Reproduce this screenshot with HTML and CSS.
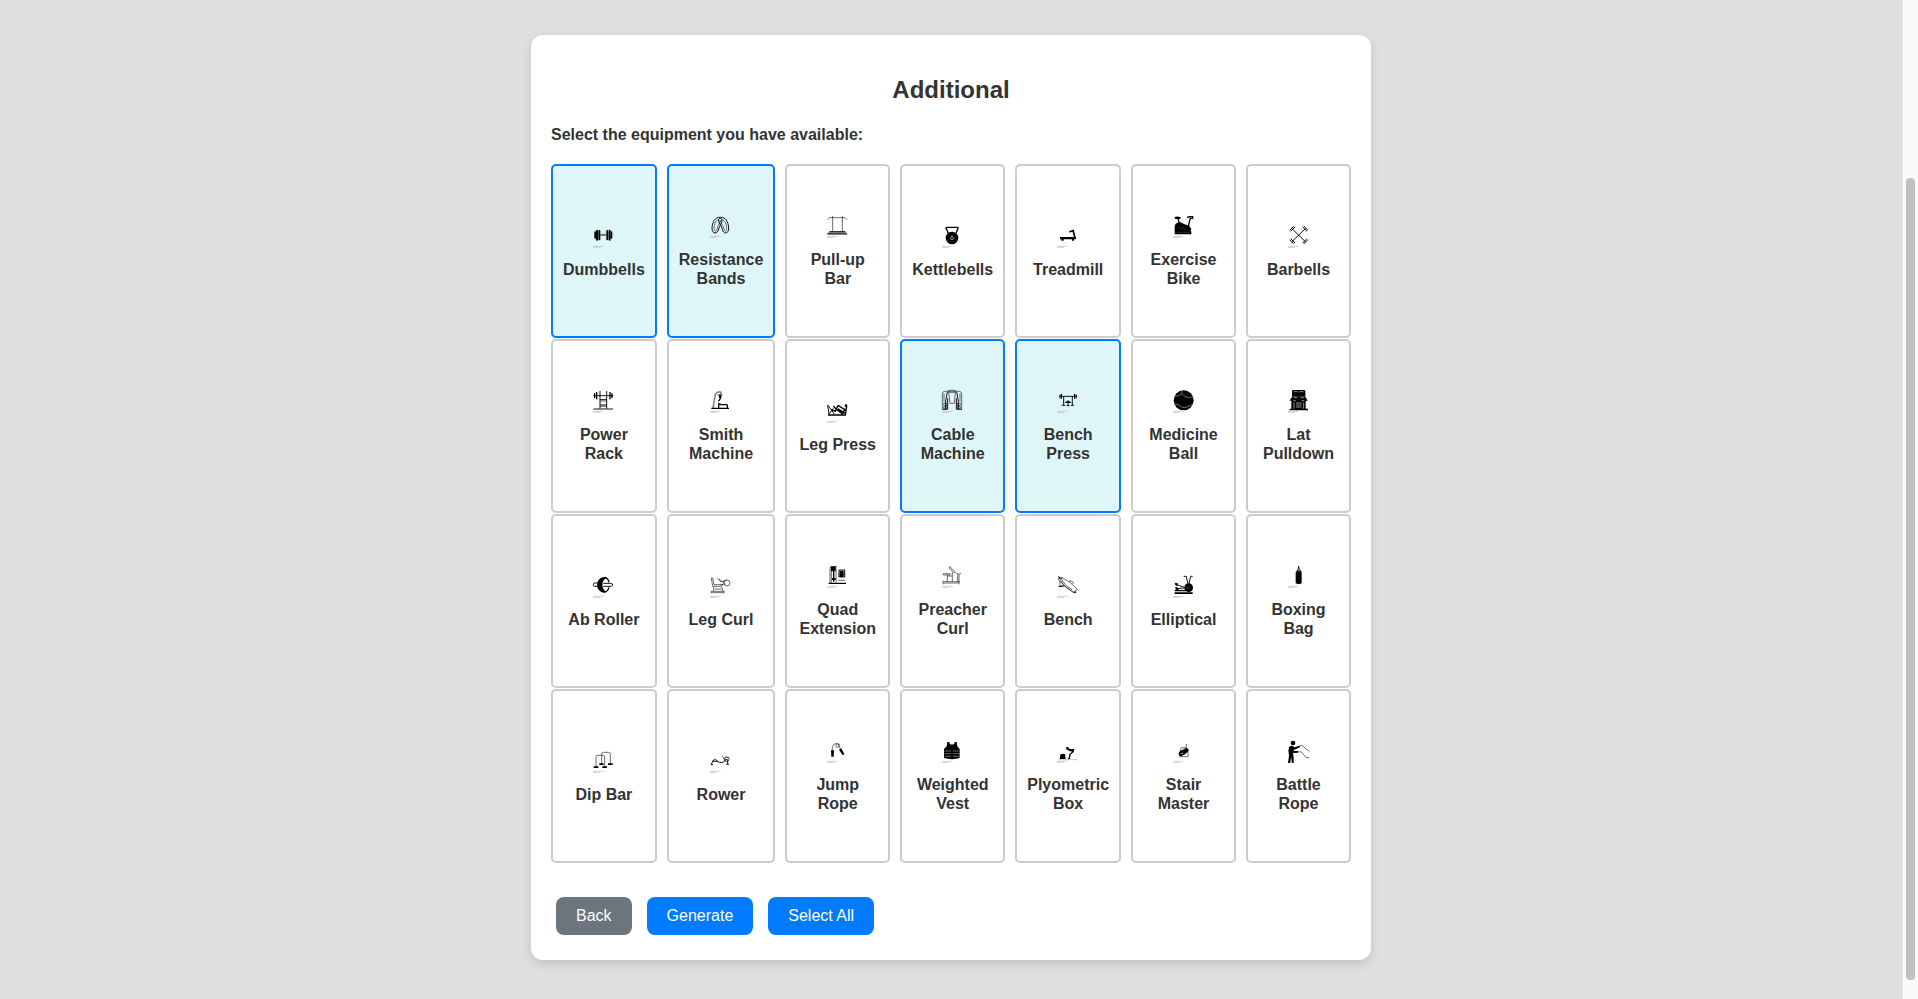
FILE: index.html
```html
<!DOCTYPE html>
<html lang="en">
<head>
<meta charset="utf-8">
<meta name="viewport" content="width=device-width, initial-scale=1">
<title>Additional</title>
<link rel="stylesheet" href="styles.css">
</head>
<body>
<svg class="defs" aria-hidden="true"><defs><g id="credit"><path d="M4 67H34M3 70H24" fill="none" stroke="#bbb" stroke-width="2"/></g></defs></svg>
<div class="page">
<main class="content">
<section class="card">
<h2 class="title">Additional</h2>
<p class="prompt" id="prompt">Select the equipment you have available:</p>
<div class="grid" role="group" aria-labelledby="prompt">

<button type="button" class="item selected" aria-pressed="true"><svg class="icon" viewBox="0 0 72 78"><rect x="7" y="22" width="5" height="22" rx="2"/><rect x="12" y="17" width="6" height="33" rx="3"/><rect x="19" y="18" width="6" height="31" rx="3"/><rect x="43" y="18" width="6" height="31" rx="3"/><rect x="50" y="17" width="6" height="33" rx="3"/><rect x="56" y="22" width="5" height="22" rx="2"/><path class="th" d="M25 31H43M25 34H43"/><use href="#credit"/></svg><span>Dumbbells</span></button>

<button type="button" class="item selected" aria-pressed="true"><svg class="icon" viewBox="0 0 72 78"><path class="ln" d="M34 10C18 8 9 27 9 43C9 62 26 61 29 45C31 34 40 29 39 18C38 10 28 11 29 19C30 30 38 36 40 46C43 62 60 60 59 42C58 24 50 8 34 10Z"/><path class="th" d="M30 16C20 18 15 32 15 43C15 54 22 54 24 45C26 33 33 29 34 18M38 16C48 18 53 32 53 43C53 54 47 54 45 45C43 34 36 30 34 20"/><use href="#credit"/></svg><span>Resistance Bands</span></button>

<button type="button" class="item" aria-pressed="false"><svg class="icon" viewBox="0 0 72 78"><path class="th" d="M4 17L10 11H57L63 17M20 6V53M49 6V53"/><path d="M10 53H58L63 58V61H4V58Z" fill="#888"/><path class="ln" d="M10 53H58M4 60H63"/><use href="#credit"/></svg><span>Pull-up<br>Bar</span></button>

<button type="button" class="item" aria-pressed="false"><svg class="icon" viewBox="0 0 72 78"><path class="bd" d="M22 28L15 12Q15 10 18 10H49Q52 10 51 13L45 28"/><circle cx="33" cy="42" r="19"/><ellipse cx="33" cy="42" rx="4" ry="5" fill="none" stroke="#ddd" stroke-width="2"/><use href="#credit"/></svg><span>Kettlebells</span></button>

<button type="button" class="item" aria-pressed="false"><svg class="icon" viewBox="0 0 72 78"><path d="M57 42L51 19M40 24L53 19" fill="none" stroke="#000" stroke-width="5"/><path d="M12 39H60V46H54V50H48V46H23V50H16V46H12Z"/><use href="#credit"/></svg><span>Treadmill</span></button>

<button type="button" class="item" aria-pressed="false"><svg class="icon" viewBox="0 0 72 78"><path d="M8 9Q16 5 26 10L25 15H11Q7 13 8 9ZM8 54V36Q12 24 25 25L38 31L52 36L58 46L55 52H58V61H8V55H12Z"/><path class="bd" d="M18 13L22 28M55 11L49 37M45 11L51 8H62V13H55"/><path d="M20 37L27 46L34 43M31 35L39 50M14 55H54" fill="none" stroke="#777" stroke-width="1"/><use href="#credit"/></svg><span>Exercise<br>Bike</span></button>

<button type="button" class="item" aria-pressed="false"><svg class="icon" viewBox="0 0 72 78"><path class="ln" d="M14 13L56 54M56 13L14 54"/><path class="ln" d="M8 19L20 7M11 22L24 9M50 6L63 19M47 9L60 22M8 47L20 60M11 44L24 57M50 60L63 47M47 57L60 44"/><use href="#credit"/></svg><span>Barbells</span></button>

<button type="button" class="item" aria-pressed="false"><svg class="icon" viewBox="0 0 72 78"><path class="ln" d="M4 20H64M24 6V59M44 6V59M24 32H44M24 51H44M4 60H63"/><path class="th" d="M24 36H44M24 47H44"/><path class="bd" d="M8 13V27M14 9V31M54 9V31M60 13V27"/><use href="#credit"/></svg><span>Power<br>Rack</span></button>

<button type="button" class="item" aria-pressed="false"><svg class="icon" viewBox="0 0 72 78"><path d="M12 57L19 16Q27 5 36 10L35 16" fill="none" stroke="#888" stroke-width="5"/><path class="bd" d="M32 18L34 29L28 37M28 43L36 47H55M55 47V57M29 46V56M7 58H60"/><path class="ln" d="M26 18H40"/><circle cx="34" cy="23" r="4"/><use href="#credit"/></svg><span>Smith<br>Machine</span></button>

<button type="button" class="item" aria-pressed="false"><svg class="icon" viewBox="0 0 72 78"><path class="ln" d="M5 18L9 46M5 18L25 45M9 46L22 28"/><path class="bd" d="M16 31L28 37L36 19M22 21L31 31L48 44L58 30M36 19L58 33M6 48H58L62 22"/><path d="M35 30L56 43" stroke="#000" stroke-width="6"/><circle cx="60" cy="20" r="4"/><use href="#credit"/></svg><span>Leg Press</span></button>

<button type="button" class="item selected" aria-pressed="true"><svg class="icon" viewBox="0 0 72 78"><path class="th" d="M4 61V14Q4 8 11 7H55Q62 8 62 14V61M23 4H43V10H23ZM23 10L27 43H40L43 10M9 38V14M57 38V14M8 43H18V49H8ZM48 43H58V49H48ZM8 53H18V58H8ZM48 53H58V58H48Z"/><path class="ln" d="M19 9L14 36V60M47 9L52 36V60M20 28V60M46 28V60M4 61H20M46 61H63"/><use href="#credit"/></svg><span>Cable<br>Machine</span></button>

<button type="button" class="item selected" aria-pressed="true"><svg class="icon" viewBox="0 0 72 78"><path class="ln" d="M10 22H63M23 22V48M49 22V48M27 40H46M36 34V50M17 49H28M45 49H54M32 50H41M12 17V28M61 17V28"/><path class="bd" d="M16 15V29M56 15V29M31 39H42"/><use href="#credit"/></svg><span>Bench<br>Press</span></button>

<button type="button" class="item" aria-pressed="false"><svg class="icon" viewBox="0 0 72 78"><circle cx="35" cy="34" r="30"/><path d="M30 4V14Q22 22 6 22M30 14Q38 26 49 25T64 24M7 44Q20 46 28 53T54 50L64 44" fill="none" stroke="#aaa" stroke-width="2"/><use href="#credit"/></svg><span>Medicine<br>Ball</span></button>

<button type="button" class="item" aria-pressed="false"><svg class="icon" viewBox="0 0 72 78"><path d="M15 5L18 3H52L55 5V25L59 29L62 36H56V59H63V64H8V59H13V35H8L11 29L15 25Z"/><path d="M20 8H32M38 8H50M20 26H30M41 26H51M19 35H26M44 35H51M27 42H44M27 48H44M27 54H44M21 40V59M50 40V59" fill="none" stroke="#ddd" stroke-width="2"/><path d="M35 4V12M15 22H55" fill="none" stroke="#aaa" stroke-width="1"/><use href="#credit"/></svg><span>Lat<br>Pulldown</span></button>

<button type="button" class="item" aria-pressed="false"><svg class="icon" viewBox="0 0 72 78"><path class="ln" d="M17 27H8Q4 27 4 32T8 37H17M34 28H57L63 32L57 37H34"/><path d="M38 9C8 10 8 55 38 56L44 53C27 48 27 17 44 12Z"/><path class="bd" d="M36 11Q48 10 51 25M51 40Q47 54 36 54"/><use href="#credit"/></svg><span>Ab Roller</span></button>

<button type="button" class="item" aria-pressed="false"><svg class="icon" viewBox="0 0 72 78"><path class="th" d="M7 12L11 37H38L41 32H15L11 12ZM14 38V52M38 38L42 52M6 52H46V56H6ZM25 12L35 23L50 20M35 31H45M30 15L49 31M43 23L53 17"/><circle class="th" cx="54" cy="27" r="9"/><path class="th" d="M18 45H37"/><use href="#credit"/></svg><span>Leg Curl</span></button>

<button type="button" class="item" aria-pressed="false"><svg class="icon" viewBox="0 0 72 78"><path class="th" d="M12 8V56M16 8V56M30 11V56M37 49H57M37 31H58M37 39H58"/><path d="M15 9H29V22H15ZM21 22H25V53H21ZM41 20H53V40H41ZM8 56H60V60H8ZM18 42H29V48H18Z"/><path class="ln" d="M14 8H32M39 18H57M39 18V39M56 18V39"/><use href="#credit"/></svg><span>Quad<br>Extension</span></button>

<button type="button" class="item" aria-pressed="false"><svg class="icon" viewBox="0 0 72 78"><path class="th" d="M26 8L43 24L40 27L24 12ZM7 29H27V33H7ZM19 33V53M20 36H33M34 25V53M7 53H56M7 57H54M6 50V61M54 31V61M50 31V54M45 28H50L54 31L60 27"/><use href="#credit"/></svg><span>Preacher<br>Curl</span></button>

<button type="button" class="item" aria-pressed="false"><svg class="icon" viewBox="0 0 72 78"><path class="th" d="M8 11L19 12L42 25L64 46L53 54L28 39ZM14 12L30 35L49 47M8 11V18L31 40L54 57L61 51M12 21V38H7M12 38L24 33M39 21H47L53 30"/><path class="ln" d="M7 7L15 14L19 10M9 37H23M53 55H61"/><use href="#credit"/></svg><span>Bench</span></button>

<button type="button" class="item" aria-pressed="false"><svg class="icon" viewBox="0 0 72 78"><circle cx="50" cy="41" r="13"/><path class="ln" d="M35 7H43L48 32M62 7H56L50 33M10 31L46 43M10 45L44 41M8 27L14 30M9 42L16 40"/><circle cx="16" cy="45" r="4"/><circle cx="14" cy="31" r="4"/><path d="M8 48H42V52H8ZM8 55H62V60H8Z"/><circle cx="50" cy="41" r="4" fill="none" stroke="#999" stroke-width="1"/><use href="#credit"/></svg><span>Elliptical</span></button>

<button type="button" class="item" aria-pressed="false"><svg class="icon" viewBox="0 0 72 78"><path d="M33 7H37V12L42 21Q44 22 44 26V58Q35 63 26 58V26Q26 22 29 21L33 12Z"/><path d="M31 20L35 11L40 20" fill="#888"/><path d="M26 24H44" fill="none" stroke="#999" stroke-width="1"/><use href="#credit"/></svg><span>Boxing<br>Bag</span></button>

<button type="button" class="item" aria-pressed="false"><svg class="icon" viewBox="0 0 72 78"><path class="th" d="M12 54V24Q12 19 17 19H34Q38 19 38 24V54M29 45V15Q29 10 34 10H50Q55 10 55 15V45"/><path d="M5 52H19V57H5ZM31 52H45V57H31ZM22 43H35V48H22ZM48 43H62V48H48Z"/><use href="#credit"/></svg><span>Dip Bar</span></button>

<button type="button" class="item" aria-pressed="false"><svg class="icon" viewBox="0 0 72 78"><path class="ln" d="M7 46L11 37H25L32 40H43L49 32H56V45M52 46H60M5 47H12M10 36L19 31L27 38"/><path class="th" d="M40 20L45 31L52 37M46 28L54 24L61 27"/><circle class="th" cx="53" cy="31" r="7"/><use href="#credit"/></svg><span>Rower</span></button>

<button type="button" class="item" aria-pressed="false"><svg class="icon" viewBox="0 0 72 78"><path class="th" d="M19 34V25Q20 14 31 13Q42 13 38 23Q31 29 29 21Q29 13 39 16L43 31"/><path d="M15 34H24L23 53H16ZM39 32L46 28L55 45L50 49Z"/><use href="#credit"/></svg><span>Jump<br>Rope</span></button>

<button type="button" class="item" aria-pressed="false"><svg class="icon" viewBox="0 0 72 78"><path d="M19 9H25L26 14Q33 19 40 14L41 9H47L49 22L56 30V57Q33 64 9 57V30L17 22Z"/><path d="M10 36H30M36 36H55M10 44H30M36 44H55M10 52H30M36 52H55" fill="none" stroke="#999" stroke-width="2"/><use href="#credit"/></svg><span>Weighted<br>Vest</span></button>

<button type="button" class="item" aria-pressed="false"><svg class="icon" viewBox="0 0 72 78"><path d="M14 45H27L29 60H11Z"/><circle cx="34" cy="28" r="4"/><path d="M35 30L44 34L53 36" fill="none" stroke="#000" stroke-width="6"/><path class="bd" d="M53 37L42 46L40 58L36 60M43 33L55 32"/><path d="M8 62H64" stroke="#aaa" stroke-width="2"/><use href="#credit"/></svg><span>Plyometric<br>Box</span></button>

<button type="button" class="item" aria-pressed="false"><svg class="icon" viewBox="0 0 72 78"><path class="th" d="M43 15V28L48 32V53H23M24 37L28 26H43"/><path d="M20 42Q23 35 30 33L41 28Q49 26 50 33Q48 41 39 46L29 51Q20 54 20 42Z"/><path d="M26 45L34 42" fill="none" stroke="#fff" stroke-width="2"/><use href="#credit"/></svg><span>Stair<br>Master</span></button>

<button type="button" class="item" aria-pressed="false"><svg class="icon" viewBox="0 0 72 78"><circle cx="18" cy="12" r="7"/><path d="M7 23Q16 17 23 25L38 20L39 25L22 32L19 36L33 36V41L18 42L20 55V72H15L12 54L10 72H3L6 50L4 34Z"/><path class="th" d="M37 21Q44 16 50 23T67 37M31 39Q43 34 49 46T67 57"/></svg><span>Battle<br>Rope</span></button>

</div>
<div class="actions">
<button type="button" class="btn btn-back">Back</button>
<button type="button" class="btn">Generate</button>
<button type="button" class="btn">Select All</button>
</div>
</section>
</main>
<div class="scroll-track" aria-hidden="true"><div class="scroll-thumb"></div></div>
</div>
</body>
</html>
```
FILE: styles.css
```css
* { box-sizing: border-box; }

body {
  margin: 0;
  background: #dfdfdf;
  color: #333;
  font-family: "Liberation Sans", Arial, sans-serif;
  font-size: 16px;
}

.defs { display: block; width: 0; height: 0; }

.page { display: flex; min-height: 100vh; }

.content { flex: 1; padding: 35px 20px; }

.card {
  max-width: 840px;
  margin: 0 auto;
  padding: 20px 20px 25px;
  background: #fff;
  border-radius: 12px;
  box-shadow: 0 4px 12px rgba(0, 0, 0, 0.12);
}

.title {
  margin: 21px 0;
  font-size: 24px;
  line-height: 28px;
  text-align: center;
}

.prompt {
  margin: 0 0 19px;
  font-weight: bold;
  line-height: 20px;
}

.grid {
  display: grid;
  grid-template-columns: repeat(7, 1fr);
  gap: 1px 10px;
}

.item {
  display: flex;
  flex-direction: column;
  align-items: center;
  justify-content: center;
  gap: 10px;
  min-height: 174px;
  padding: 10px;
  border: 2px solid #ccc;
  border-radius: 5px;
  background: #fff;
  color: #333;
  font: bold 16px/19px "Liberation Sans", Arial, sans-serif;
  text-align: center;
  cursor: pointer;
}

.item.selected { border-color: #007bff; background: #dff6f9; }

.icon { width: 24px; height: 26px; }
.icon .th { fill: none; stroke: #222; stroke-width: 2; }
.icon .ln { fill: none; stroke: #111; stroke-width: 3; }
.icon .bd { fill: none; stroke: #000; stroke-width: 4; }

.actions {
  display: flex;
  gap: 15px;
  margin-top: 34px;
  padding-left: 5px;
}

.btn {
  padding: 10px 20px;
  border: 0;
  border-radius: 8px;
  background: #007bff;
  color: #fff;
  font: 16px/18px "Liberation Sans", Arial, sans-serif;
  cursor: pointer;
}

.btn-back { background: #6c757d; }

.scroll-track {
  display: grid;
  grid-template-rows: 178fr 802fr 19fr;
  width: 16px;
  padding: 0 3px;
  border-left: 1px solid #e8e8e8;
  background: #fafafa;
}

.scroll-thumb { grid-row: 2; border-radius: 4px; background: #c1c1c1; }
```
